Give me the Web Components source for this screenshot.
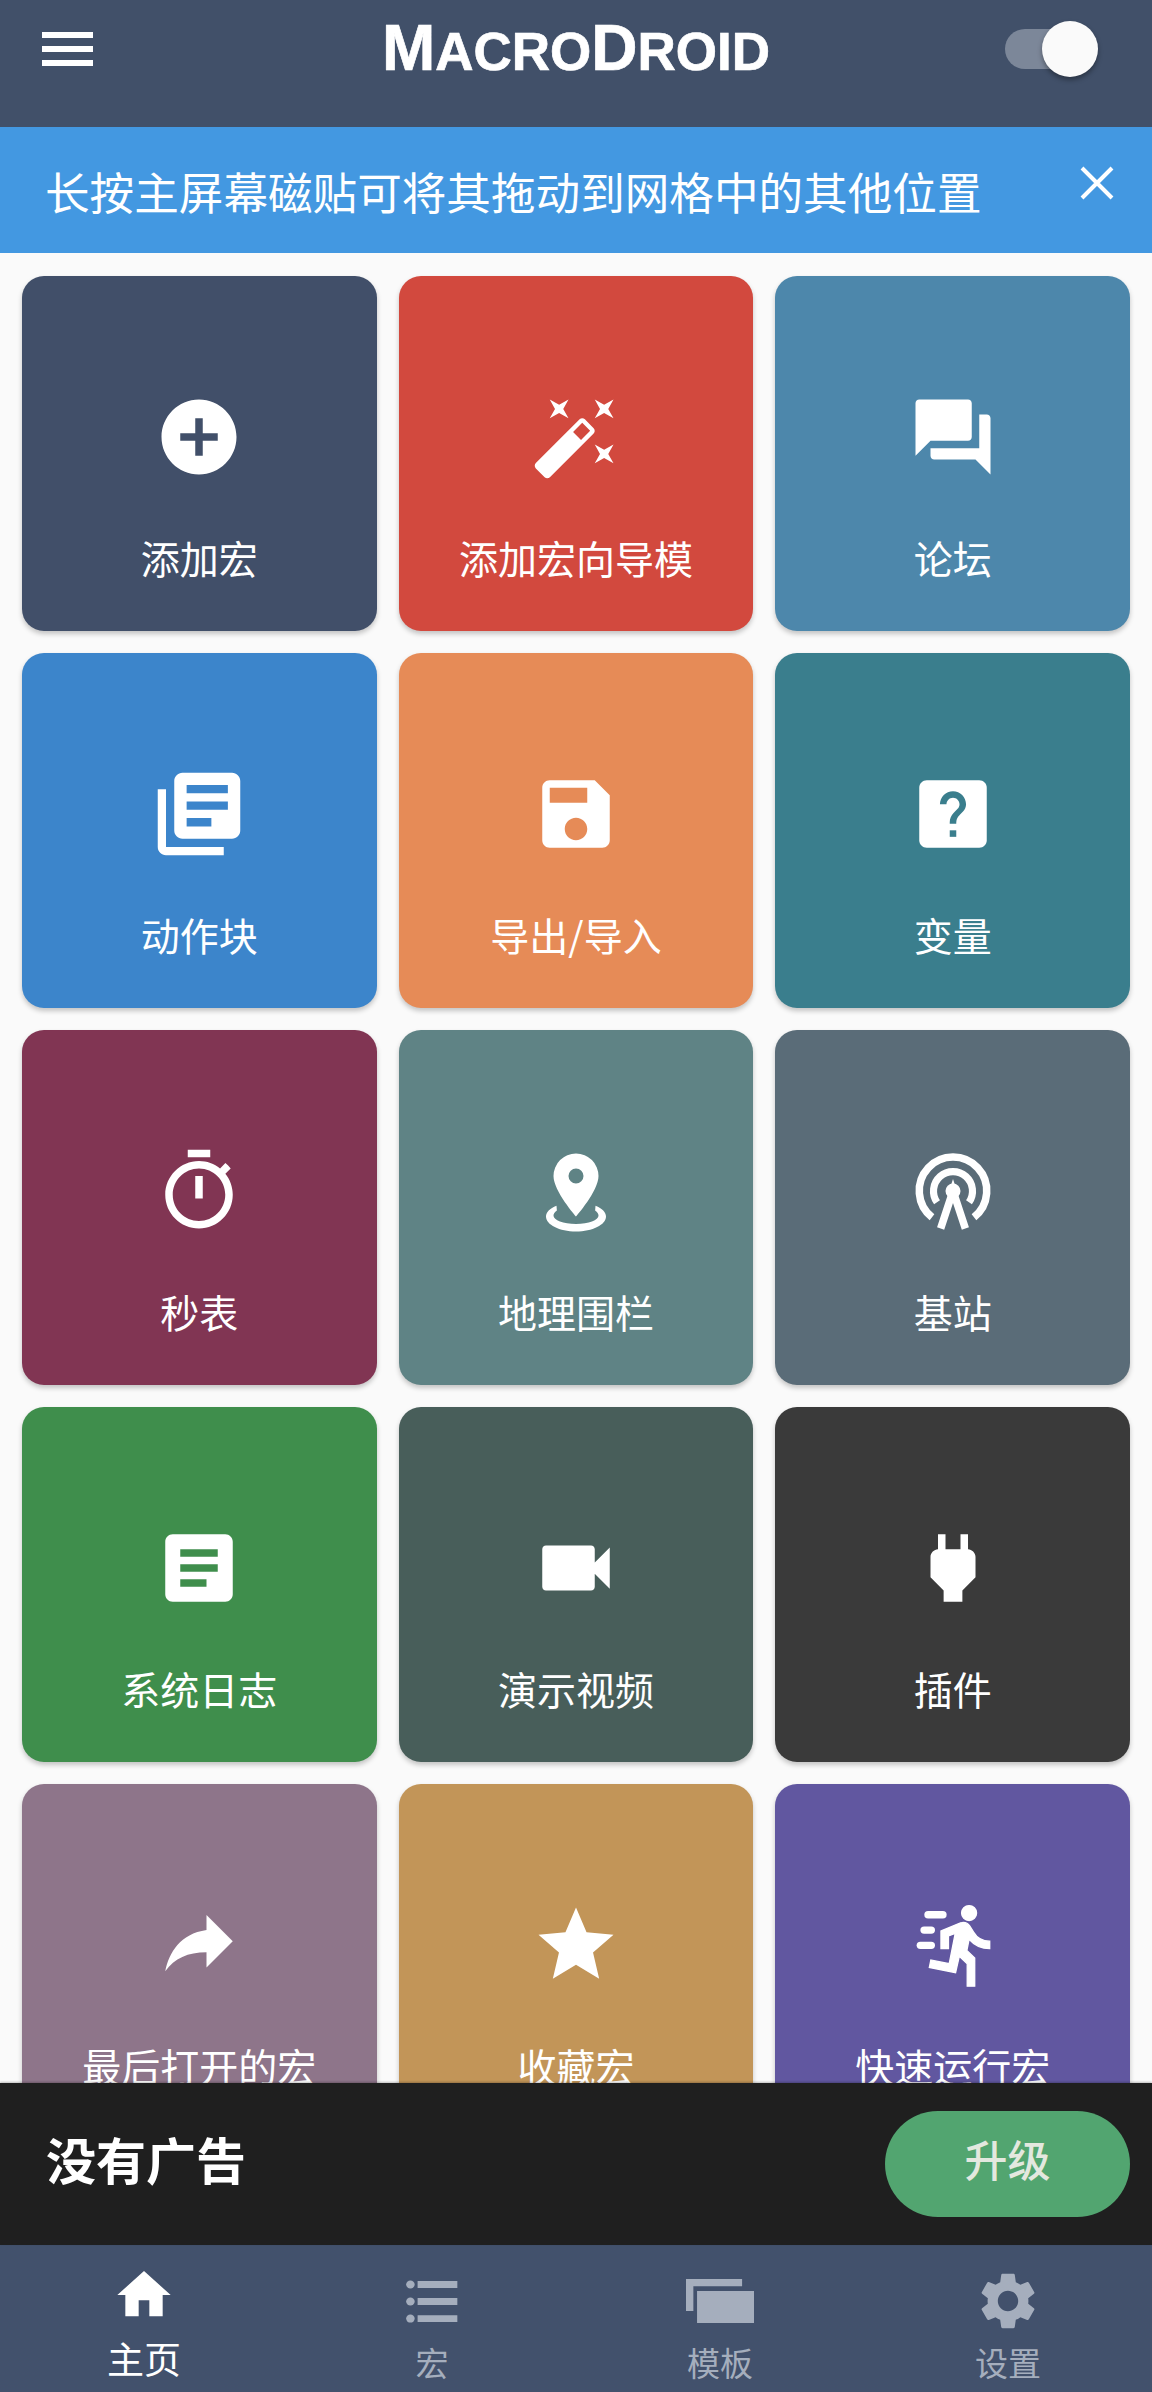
<!DOCTYPE html>
<html lang="zh">
<head>
<meta charset="utf-8">
<title>MacroDroid</title>
<style>
  html, body { margin: 0; height: 100%; background: #fafafa; }
  body { font-family: "Noto Sans CJK SC", "Noto Sans", sans-serif; }
</style>
</head>
<body>
<main-screen>
  <app-header slot="header"></app-header>
  <tip-banner slot="banner">长按主屏幕磁贴可将其拖动到网格中的其他位置</tip-banner>
  <tile-grid slot="content">
    <home-tile bg="#414f69" icon="add">添加宏</home-tile>
    <home-tile bg="#d2493e" icon="wand">添加宏向导模</home-tile>
    <home-tile bg="#4d87ab" icon="forum">论坛</home-tile>
    <home-tile bg="#3c85cb" icon="books">动作块</home-tile>
    <home-tile bg="#e68b57" icon="save">导出/导入</home-tile>
    <home-tile bg="#3a7e8d" icon="help">变量</home-tile>
    <home-tile bg="#813553" icon="timer">秒表</home-tile>
    <home-tile bg="#5f8385" icon="geofence">地理围栏</home-tile>
    <home-tile bg="#5a6c78" icon="tower">基站</home-tile>
    <home-tile bg="#3f8e4c" icon="article">系统日志</home-tile>
    <home-tile bg="#485e5a" icon="video">演示视频</home-tile>
    <home-tile bg="#3a3a3a" icon="plug">插件</home-tile>
    <home-tile bg="#8e758a" icon="share">最后打开的宏</home-tile>
    <home-tile bg="#c29558" icon="star">收藏宏</home-tile>
    <home-tile bg="#6157a0" icon="run">快速运行宏</home-tile>
  </tile-grid>
  <ad-bar slot="ad" action="升级">没有广告</ad-bar>
  <bottom-nav slot="nav">
    <nav-item icon="home" size="64" active>主页</nav-item>
    <nav-item icon="list" size="64">宏</nav-item>
    <nav-item icon="templates" size="68">模板</nav-item>
    <nav-item icon="gear" size="68">设置</nav-item>
  </bottom-nav>
</main-screen>

<script>
// Material paths, the few that don't exist there are drawn by hand
const ICONS = {
  add: '<path d="M12 2C6.48 2 2 6.48 2 12s4.48 10 10 10 10-4.48 10-10S17.52 2 12 2zm5 11h-4v4h-2v-4H7v-2h4V7h2v4h4v2z"/>',
  wand: '<path d="M7.5 5.6L10 7 8.6 4.5 10 2 7.5 3.4 5 2l1.4 2.5L5 7zm12 9.8L17 14l1.4 2.5L17 19l2.5-1.4L22 19l-1.4-2.5L22 14zM22 2l-2.5 1.4L17 2l1.4 2.5L17 7l2.5-1.4L22 7l-1.4-2.5zm-7.63 5.29c-.39-.39-1.02-.39-1.41 0L1.29 18.96c-.39.39-.39 1.02 0 1.41l2.34 2.34c.39.39 1.02.39 1.41 0L16.7 11.05c.39-.39.39-1.02 0-1.41l-2.33-2.35zm-1.03 5.49l-2.12-2.12 2.44-2.44 2.12 2.12-2.44 2.44z"/>',
  forum: '<path d="M21 6h-2v9H6v2c0 .55.45 1 1 1h11l4 4V7c0-.55-.45-1-1-1zm-4 6V3c0-.55-.45-1-1-1H3c-.55 0-1 .45-1 1v14l4-4h10c.55 0 1-.45 1-1z"/>',
  books: '<g transform="translate(12 12) scale(1.1) translate(-12 -12)"><path d="M4 6H2v14c0 1.1.9 2 2 2h14v-2H4V6zm16-4H8c-1.1 0-2 .9-2 2v12c0 1.1.9 2 2 2h12c1.1 0 2-.9 2-2V4c0-1.1-.9-2-2-2zm-1 9H9V9h10v2zm-4 4H9v-2h6v2zm4-8H9V5h10v2z"/></g>',
  save: '<path d="M17 3H5c-1.11 0-2 .9-2 2v14c0 1.1.89 2 2 2h14c1.1 0 2-.9 2-2V7l-4-4zm-5 16c-1.66 0-3-1.34-3-3s1.34-3 3-3 3 1.34 3 3-1.34 3-3 3zm3-10H5V5h10v4z"/>',
  help: '<path d="M19 3H5c-1.1 0-2 .9-2 2v14c0 1.1.9 2 2 2h14c1.1 0 2-.9 2-2V5c0-1.1-.9-2-2-2z"/><g transform="translate(12 12) scale(.87) translate(-12 -12)" fill="var(--tile-bg)"><path d="M15.07 11.25l-.9.92C13.45 12.9 13 13.5 13 15h-2v-.5c0-1.1.45-2.1 1.17-2.83l1.24-1.26c.37-.36.59-.86.59-1.41 0-1.1-.9-2-2-2s-2 .9-2 2H8c0-2.21 1.79-4 4-4s4 1.79 4 4c0 .88-.36 1.68-.93 2.25z"/><path d="M13 19h-2v-2h2v2z"/></g>',
  timer: '<path d="M15 1H9v2h6V1zm-4 13h2V8h-2v6zm8.03-6.61l1.42-1.42c-.43-.51-.9-.99-1.41-1.41l-1.42 1.42C16.07 4.74 14.12 4 12 4c-4.97 0-9 4.03-9 9s4.02 9 9 9 9-4.03 9-9c0-2.12-.74-4.07-1.97-5.61zM12 20c-3.87 0-7-3.13-7-7s3.13-7 7-7 7 3.13 7 7-3.13 7-7 7z"/>',
  geofence: '<path fill-rule="evenodd" d="M12 2a6 6 0 0 0-6 6c0 4 6 10.8 6 10.8S18 12 18 8a6 6 0 0 0-6-6zm0 4a2 2 0 1 1 0 4 2 2 0 0 1 0-4z"/><path d="M6.8 15.9C5 16.6 4 17.6 4 18.8 4 21 7.6 22.8 12 22.8s8-1.8 8-4c0-1.2-1-2.2-2.8-2.9l-.1 1.3c.6.4.9.9.9 1.4 0 1.1-2.6 2.2-6 2.2s-6-1.1-6-2.2c0-.5.3-1 .9-1.4z"/>',
  tower: '<g fill="none" stroke="#fff" stroke-width="2"><path d="M6.4 19A9 9 0 1 1 17.6 19"/><path d="M7.74 15A5.2 5.2 0 1 1 16.26 15" stroke-width="1.9"/><path d="M8.7 22L12 12l3.3 10"/></g><circle cx="12" cy="12" r="2"/>',
  article: '<path d="M19 3H5c-1.1 0-2 .9-2 2v14c0 1.1.9 2 2 2h14c1.1 0 2-.9 2-2V5c0-1.1-.9-2-2-2zm-5 14H7v-2h7v2zm3-4H7v-2h10v2zm0-4H7V7h10v2z"/>',
  video: '<path d="M17 10.5V7c0-.55-.45-1-1-1H4c-.55 0-1 .45-1 1v10c0 .55.45 1 1 1h12c.55 0 1-.45 1-1v-3.5l4 4v-11l-4 4z"/>',
  plug: '<path d="M16.01 7L16 3h-2v4h-4V3H8v4h-.01C7 6.99 6 7.99 6 8.99v5.49L9.5 18v3h5v-3l3.5-3.51v-5.5c0-1-1-2-1.99-1.99z"/>',
  share: '<path transform="translate(0 -1)" d="M14 9V5l7 7-7 7v-4.1c-5 0-8.5 1.6-11 5.1 1-5 4-10 11-11z"/>',
  star: '<path d="M12 17.27L18.18 21l-1.64-7.03L22 9.24l-7.19-.61L12 2 9.19 8.63 2 9.24l5.46 4.73L5.82 21z"/>',
  run: '<g transform="translate(2.8 0)"><path stroke="#fff" stroke-width=".35" d="M13.49 5.48c1.1 0 2-.9 2-2s-.9-2-2-2-2 .9-2 2 .9 2 2 2zm-3.6 13.9l1-4.4 2.1 2v6h2v-7.5l-2.1-2 .6-3c1.3 1.5 3.3 2.5 5.5 2.5v-2c-1.9 0-3.5-1-4.3-2.4l-1-1.6c-.4-.6-1-1-1.7-1-.3 0-.5.1-.8.1l-5.2 2.2v4.7h2v-3.4l1.8-.7-1.6 8.1-4.9-1-.4 2 7 1.4z"/></g><rect x="4.35" y="2.95" width="5.95" height="2" rx="1"/><rect x="3.3" y="7.05" width="3.9" height="1.95" rx="1"/><rect x="2.3" y="11.1" width="4.9" height="1.95" rx="1"/>',
  home: '<path d="M10 20v-6h4v6h5v-8h3L12 3 2 12h3v8z"/>',
  list: '<ellipse cx="3.9" cy="5.8" rx="1.6" ry="1.5"/><ellipse cx="3.9" cy="12.2" rx="1.6" ry="1.5"/><ellipse cx="3.9" cy="18.6" rx="1.6" ry="1.5"/><path d="M6.6 4.5h14.9v2.6H6.6zM6.6 10.9h14.9v2.6H6.6zM6.6 17.3h14.9v2.6H6.6z"/>',
  templates: '<path d="M0 4.2h19.8v2.6H2.6v8.7H0z"/><path d="M3.9 8.5H24v11.3H3.9z"/>',
  gear: '<path d="M19.14 12.94c.04-.3.06-.61.06-.94 0-.32-.02-.64-.07-.94l2.03-1.58c.18-.14.23-.41.12-.61l-1.92-3.32c-.12-.22-.37-.29-.59-.22l-2.39.96c-.5-.38-1.03-.7-1.62-.94l-.36-2.54c-.04-.24-.24-.41-.48-.41h-3.84c-.24 0-.43.17-.47.41l-.36 2.54c-.59.24-1.13.57-1.62.94l-2.39-.96c-.22-.08-.47 0-.59.22L2.74 8.87c-.12.21-.08.47.12.61l2.03 1.58c-.05.3-.09.63-.09.94s.02.64.07.94l-2.03 1.58c-.18.14-.23.41-.12.61l1.92 3.32c.12.22.37.29.59.22l2.39-.96c.5.38 1.03.7 1.62.94l.36 2.54c.05.24.24.41.48.41h3.84c.24 0 .44-.17.47-.41l.36-2.54c.59-.24 1.13-.56 1.62-.94l2.39.96c.22.08.47 0 .59-.22l1.92-3.32c.12-.22.07-.47-.12-.61l-2.01-1.58zM12 15.6c-1.98 0-3.6-1.62-3.6-3.6s1.62-3.6 3.6-3.6 3.6 1.62 3.6 3.6-1.62 3.6-3.6 3.6z"/>'
};

// Shell of the screen: fixed bars top and bottom, tiles cut off in between
class MainScreen extends HTMLElement {
  constructor() {
    super();
    this.attachShadow({ mode: 'open' });
    this.shadowRoot.innerHTML = `
      <style>
        :host { display: flex; flex-direction: column; height: 100vh; overflow: hidden; }
        .content { flex: 1; min-height: 0; overflow: hidden; }
      </style>
      <slot name="header"></slot>
      <slot name="banner"></slot>
      <div class="content"><slot name="content"></slot></div>
      <slot name="ad"></slot>
      <slot name="nav"></slot>
    `;
  }
}

class AppHeader extends HTMLElement {
  constructor() {
    super();
    this.attachShadow({ mode: 'open' });
    this.shadowRoot.innerHTML = `
      <style>
        :host {
          display: grid;
          grid-template-columns: 1fr auto 1fr;
          align-items: center;
          height: 127px;
          box-sizing: border-box;
          padding: 0 54px 30px 42px;
          background: #415069;
          color: #fff;
        }
        .menu { display: flex; flex-direction: column; gap: 8px; width: 51px; }
        .menu span { height: 6px; background: #fff; }
        .logo {
          font: bold 64px/64px "Liberation Sans", sans-serif;
          -webkit-text-stroke: .7px #fff;
          margin-left: 12px;
          white-space: nowrap;
          position: relative;
          top: 1px;
        }
        .logo small { font-size: 53px; text-transform: uppercase; }
        .toggle { justify-self: end; position: relative; width: 93px; height: 56px; }
        .track {
          position: absolute; left: 0; top: 8px;
          width: 70px; height: 40px;
          border-radius: 20px;
          background: #7c8799;
        }
        .thumb {
          position: absolute; right: 0; top: 0;
          width: 56px; height: 56px;
          border-radius: 50%;
          background: #fafafa;
          box-shadow: 0 3px 5px rgba(0,0,0,.35);
        }
      </style>
      <div class="menu"><span></span><span></span><span></span></div>
      <div class="logo">M<small>acro</small>D<small>roid</small></div>
      <div class="toggle"><div class="track"></div><div class="thumb"></div></div>
    `;
  }
}

class TipBanner extends HTMLElement {
  constructor() {
    super();
    this.attachShadow({ mode: 'open' });
    this.shadowRoot.innerHTML = `
      <style>
        :host {
          display: flex;
          align-items: center;
          justify-content: space-between;
          height: 126px;
          box-sizing: border-box;
          padding: 0 38px 0 45px;
          background: #4398e1;
          color: #fff;
          font-size: 44.6px;
          white-space: nowrap;
        }
        svg { width: 34px; height: 34px; margin-top: -14px; }
      </style>
      <slot></slot>
      <svg viewBox="0 0 34 34"><path d="M2 2l30 30M32 2L2 32" stroke="#fff" stroke-width="4" fill="none"/></svg>
    `;
  }
}

class TileGrid extends HTMLElement {
  constructor() {
    super();
    this.attachShadow({ mode: 'open' });
    this.shadowRoot.innerHTML = `
      <style>
        :host {
          display: grid;
          grid-template-columns: repeat(3, 1fr);
          gap: 22.33px 22px;
          padding: 23px 22px;
        }
      </style>
      <slot></slot>
    `;
  }
}

class HomeTile extends HTMLElement {
  constructor() {
    super();
    this.attachShadow({ mode: 'open' });
  }

  connectedCallback() {
    const bg = this.getAttribute('bg');
    this.shadowRoot.innerHTML = `
      <style>
        :host {
          display: flex;
          flex-direction: column;
          align-items: center;
          height: 354.67px;
          box-sizing: border-box;
          padding-top: 116px;
          border-radius: 22px;
          background: ${bg};
          --tile-bg: ${bg};
          box-shadow: 0 3px 5px rgba(0,0,0,.22);
          color: #fff;
          font-size: 39px;
        }
        svg { width: 90px; height: 90px; fill: #fff; flex: none; }
        .label { margin-top: 50px; line-height: 50px; white-space: nowrap; }
      </style>
      <svg viewBox="0 0 24 24">${ICONS[this.getAttribute('icon')]}</svg>
      <div class="label"><slot></slot></div>
    `;
  }
}

class AdBar extends HTMLElement {
  constructor() {
    super();
    this.attachShadow({ mode: 'open' });
  }

  connectedCallback() {
    this.shadowRoot.innerHTML = `
      <style>
        :host {
          display: flex;
          align-items: center;
          justify-content: space-between;
          height: 162px;
          box-sizing: border-box;
          padding: 0 22px 0 46px;
          background: #1f1f1f;
          color: #fff;
          flex: none;
          position: relative;
          box-shadow: 0 -1px 2px rgba(0,0,0,.25);
        }
        .text { font-size: 50px; font-weight: 700; margin-top: -12px; }
        button {
          width: 245px;
          height: 106px;
          border: 0;
          border-radius: 53px;
          background: #52a570;
          color: #e3e8df;
          font: 500 43px "Noto Sans CJK SC", sans-serif;
          padding: 0 0 12px;
        }
      </style>
      <div class="text"><slot></slot></div>
      <button>${this.getAttribute('action')}</button>
    `;
  }
}

class BottomNav extends HTMLElement {
  constructor() {
    super();
    this.attachShadow({ mode: 'open' });
    this.shadowRoot.innerHTML = `
      <style>
        :host {
          display: grid;
          grid-template-columns: repeat(4, 1fr);
          height: 147px;
          background: #42516c;
          flex: none;
        }
      </style>
      <slot></slot>
    `;
  }
}

class NavItem extends HTMLElement {
  constructor() {
    super();
    this.attachShadow({ mode: 'open' });
  }

  connectedCallback() {
    const size = this.getAttribute('size');
    this.shadowRoot.innerHTML = `
      <style>
        :host {
          display: flex;
          flex-direction: column;
          align-items: center;
          padding-top: 22px;
          color: #a5aebd;
          font-size: 33px;
        }
        :host([active]) { padding-top: 16px; color: #fff; font-size: 37px; }
        .icon { height: 68px; display: flex; align-items: center; }
        svg { width: ${size}px; height: ${size}px; fill: currentColor; }
        .label { margin-top: 5px; line-height: 44px; white-space: nowrap; }
        :host([active]) .label { margin-top: 7px; }
      </style>
      <div class="icon"><svg viewBox="0 0 24 24">${ICONS[this.getAttribute('icon')]}</svg></div>
      <div class="label"><slot></slot></div>
    `;
  }
}

customElements.define('main-screen', MainScreen);
customElements.define('app-header', AppHeader);
customElements.define('tip-banner', TipBanner);
customElements.define('tile-grid', TileGrid);
customElements.define('home-tile', HomeTile);
customElements.define('ad-bar', AdBar);
customElements.define('bottom-nav', BottomNav);
customElements.define('nav-item', NavItem);
</script>
</body>
</html>
